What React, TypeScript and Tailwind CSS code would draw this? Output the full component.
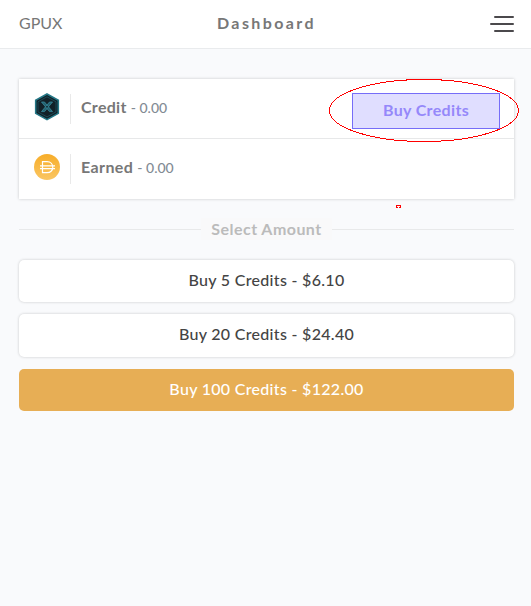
const options = [
  { label: 'Buy 5 Credits - $6.10', style: 'h-[42px] pb-0.5 bg-white text-[#444] shadow-[0_0_3px_rgba(0,0,0,0.2)]' },
  { label: 'Buy 20 Credits - $24.40', style: 'mt-3 h-[43px] pb-1 bg-white text-[#444] shadow-[0_0_3px_rgba(0,0,0,0.2)]' },
  { label: 'Buy 100 Credits - $122.00', style: 'mt-3 h-[42px] pb-0.5 bg-[#e7ae55] text-white' },
];

function CreditIcon() {
  return (
    <svg width="26" height="28" viewBox="0 0 26 28" fill="none">
      <path d="M13 1 24.3 7.2V20.4L13 26.6 1.7 20.4V7.2Z" fill="#122128" stroke="#257786" strokeWidth="1.6" />
      <path d="M13 3.8 22 8.8V18.9L13 23.9 4 18.9V8.8Z" stroke="#1d5361" strokeWidth="0.8" />
      <path d="M7.5 9H10.5L18.5 18.6H15.5ZM18.5 9H15.5L7.5 18.6H10.5Z" fill="#25616f" stroke="#36899a" strokeWidth="0.8" />
    </svg>
  );
}

function DaiIcon() {
  return (
    <svg width="26" height="26" viewBox="0 0 26 26" fill="none">
      <defs>
        <linearGradient id="gold" x1="0" y1="0" x2="0" y2="1">
          <stop stopColor="#f7ad29" />
          <stop offset="1" stopColor="#fac663" />
        </linearGradient>
      </defs>
      <circle cx="13" cy="13" r="13" fill="url(#gold)" />
      <path d="M8.5 7.7H13C20.7 7.7 20.7 18.7 13 18.7H8.5ZM6 11.9H21M6 14.7H21" stroke="#fff" strokeWidth="1.2" />
    </svg>
  );
}

export default function App() {
  return (
    <div className="relative h-[606px] w-[531px] overflow-hidden bg-[#f9fafc] font-['Lato',sans-serif] text-base leading-6">
      <header className="flex h-[49px] items-center border-b border-[#e9ebed] bg-white pl-[19px] pr-[17px]">
        <div className="w-[198px] pb-0.5 text-[#777]">GPUX</div>
        <div className="w-[120px] whitespace-nowrap pb-0.5 font-bold tracking-[2.4px] text-[#777]">Dashboard</div>
        <div className="ml-auto flex flex-col items-end gap-[5px]">
          <span className="h-[2px] w-5 rounded-full bg-[#4b494c]" />
          <span className="h-[2px] w-6 rounded-full bg-[#4b494c]" />
          <span className="h-[2px] w-5 rounded-full bg-[#4b494c]" />
        </div>
      </header>
      <main className="pl-[19px] pr-[17px] pt-[30px]">
        <section className="bg-white shadow-[0_0_3px_rgba(0,0,0,0.2)]">
          <div className="flex h-[60px] items-start border-b border-[#e7e8e9] pl-[15px] pr-[14px]">
            <div className="mt-[14px] flex w-[26px]"><CreditIcon /></div>
            <div className="ml-[10px] mt-[15px] h-[30px] w-px bg-[#e9e9e9]" />
            <div className="ml-[10px] mt-[16px] flex items-baseline gap-[4px] whitespace-nowrap">
              <span className="font-bold tracking-[0.3px] text-[#777]">Credit</span>
              <span className="text-sm font-medium text-[#828b94]">- 0.00</span>
            </div>
            <button className="ml-auto mt-[14px] h-9 w-[148px] border border-[#766df8] bg-[#e0deff] pb-0.5 font-bold tracking-[0.35px] text-[#9588fa]">Buy Credits</button>
          </div>
          <div className="flex h-[60px] items-start pl-[15px]">
            <div className="mt-[15px] flex w-[26px]"><DaiIcon /></div>
            <div className="ml-[10px] mt-[15px] h-[30px] w-px bg-[#e9e9e9]" />
            <div className="ml-[10px] mt-[16px] flex items-baseline gap-[4px] whitespace-nowrap">
              <span className="font-bold tracking-[0.4px] text-[#777]">Earned</span>
              <span className="text-sm font-medium text-[#828b94]">- 0.00</span>
            </div>
          </div>
        </section>
        <div className="mt-[18px] flex h-6 items-center">
          <div className="h-px flex-1 bg-[#e8e9ea]" />
          <div className="h-[22px] w-[131px] whitespace-nowrap bg-[#f9f9fa] text-center font-bold leading-[21px] tracking-[0.45px] text-[#bbb]">Select Amount</div>
          <div className="h-px flex-1 bg-[#e8e9ea]" />
        </div>
        <div className="mt-[19px] flex flex-col">
          {options.map((o) => (
            <button key={o.label} className={`w-full rounded-[5px] font-medium tracking-[0.3px] ${o.style}`}>{o.label}</button>
          ))}
        </div>
      </main>
      <svg className="pointer-events-none absolute inset-0" width="531" height="606" fill="none" stroke="#ff0000" shapeRendering="crispEdges">
        <ellipse cx="424" cy="110.5" rx="94.5" ry="31" />
        <path d="M398 207.5H396.5V205.5H400.5V207.5H399" />
      </svg>
    </div>
  );
}
